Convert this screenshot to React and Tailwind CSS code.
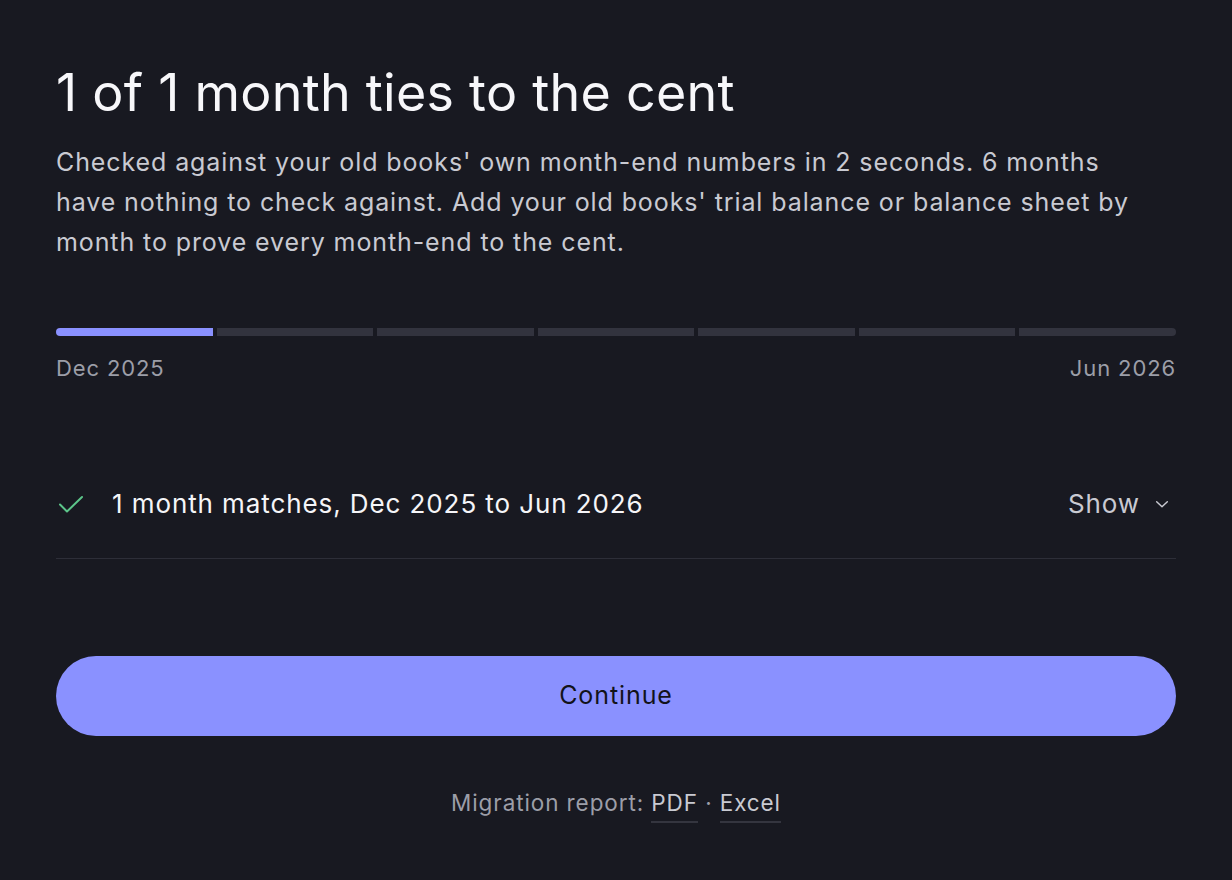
import React from 'react';

const segments = [true, false, false, false, false, false, false];

const App = () => {
  return (
    <div className="min-h-screen w-full bg-[#181921] text-white" style={{ fontFamily: 'Inter, "Noto Sans", sans-serif' }}>
      <div className="px-14 pt-[61px]">
        <h1 className="text-[52px] leading-[64px] font-normal tracking-[0.005em] text-[#f7f7fa]">1 of 1 month ties to the cent</h1>
        <p className="mt-[17px] max-w-[1102px] text-[25px] leading-[40px] tracking-[0.036em] text-[#c9cad2]">
          Checked against your old books' own month-end numbers in 2 seconds. 6 months have nothing to check against. Add your old books' trial balance or balance sheet by month to prove every month-end to the cent.
        </p>

        <div className="mt-[66px] flex gap-1">
          {segments.map((on, i) => (
            <div
              key={i}
              className={
                'h-2 flex-1 ' +
                (on ? 'bg-[#8a91ff] ' : 'bg-[#32333e] ') +
                (i === 0 ? 'rounded-l-full ' : '') +
                (i === segments.length - 1 ? 'rounded-r-full' : '')
              }
            />
          ))}
        </div>
        <div className="mt-[17px] flex justify-between text-[22px] leading-[30px] tracking-[0.04em] text-[#9c9ea8]">
          <span>Dec 2025</span>
          <span>Jun 2026</span>
        </div>

        <div className="mt-[103px] flex items-center justify-between border-b border-[#2d2e38] pb-[36px]">
          <div className="flex items-center gap-[28px]">
            <svg width="28" height="20" viewBox="0 0 28 20" fill="none" stroke="#5cc58a" strokeWidth="2" strokeLinecap="round" strokeLinejoin="round">
              <path d="M4 10.5l7 7L26 3" />
            </svg>
            <span className="text-[26px] leading-[36px] tracking-[0.035em] text-[#f5f5f8]">1 month matches, Dec 2025 to Jun 2026</span>
          </div>
          <button className="flex items-center gap-[14px] pr-[6px] text-[26px] leading-[36px] tracking-[0.035em] text-[#c9cad2]">
            Show
            <svg width="16" height="16" viewBox="0 0 24 24" fill="none" stroke="#c9cad2" strokeWidth="2.2" strokeLinecap="round" strokeLinejoin="round">
              <path d="M4 8.5l8 7.5 8-7.5" />
            </svg>
          </button>
        </div>

        <button className="mt-[97px] h-20 w-full rounded-full bg-[#8a91ff] text-[25px] tracking-[0.036em] text-[#12131a]">Continue</button>

        <div className="mt-[52px] text-center text-[22.5px] leading-[30px] tracking-[0.04em] text-[#9c9ea8]">
          Migration report:{' '}
          <span className="border-b-2 border-[#34353f] pb-[5px] text-[#c9cad2]">PDF</span>
          {' · '}
          <span className="border-b-2 border-[#34353f] pb-[5px] text-[#c9cad2]">Excel</span>
        </div>
      </div>
    </div>
  );
};

export default App;
